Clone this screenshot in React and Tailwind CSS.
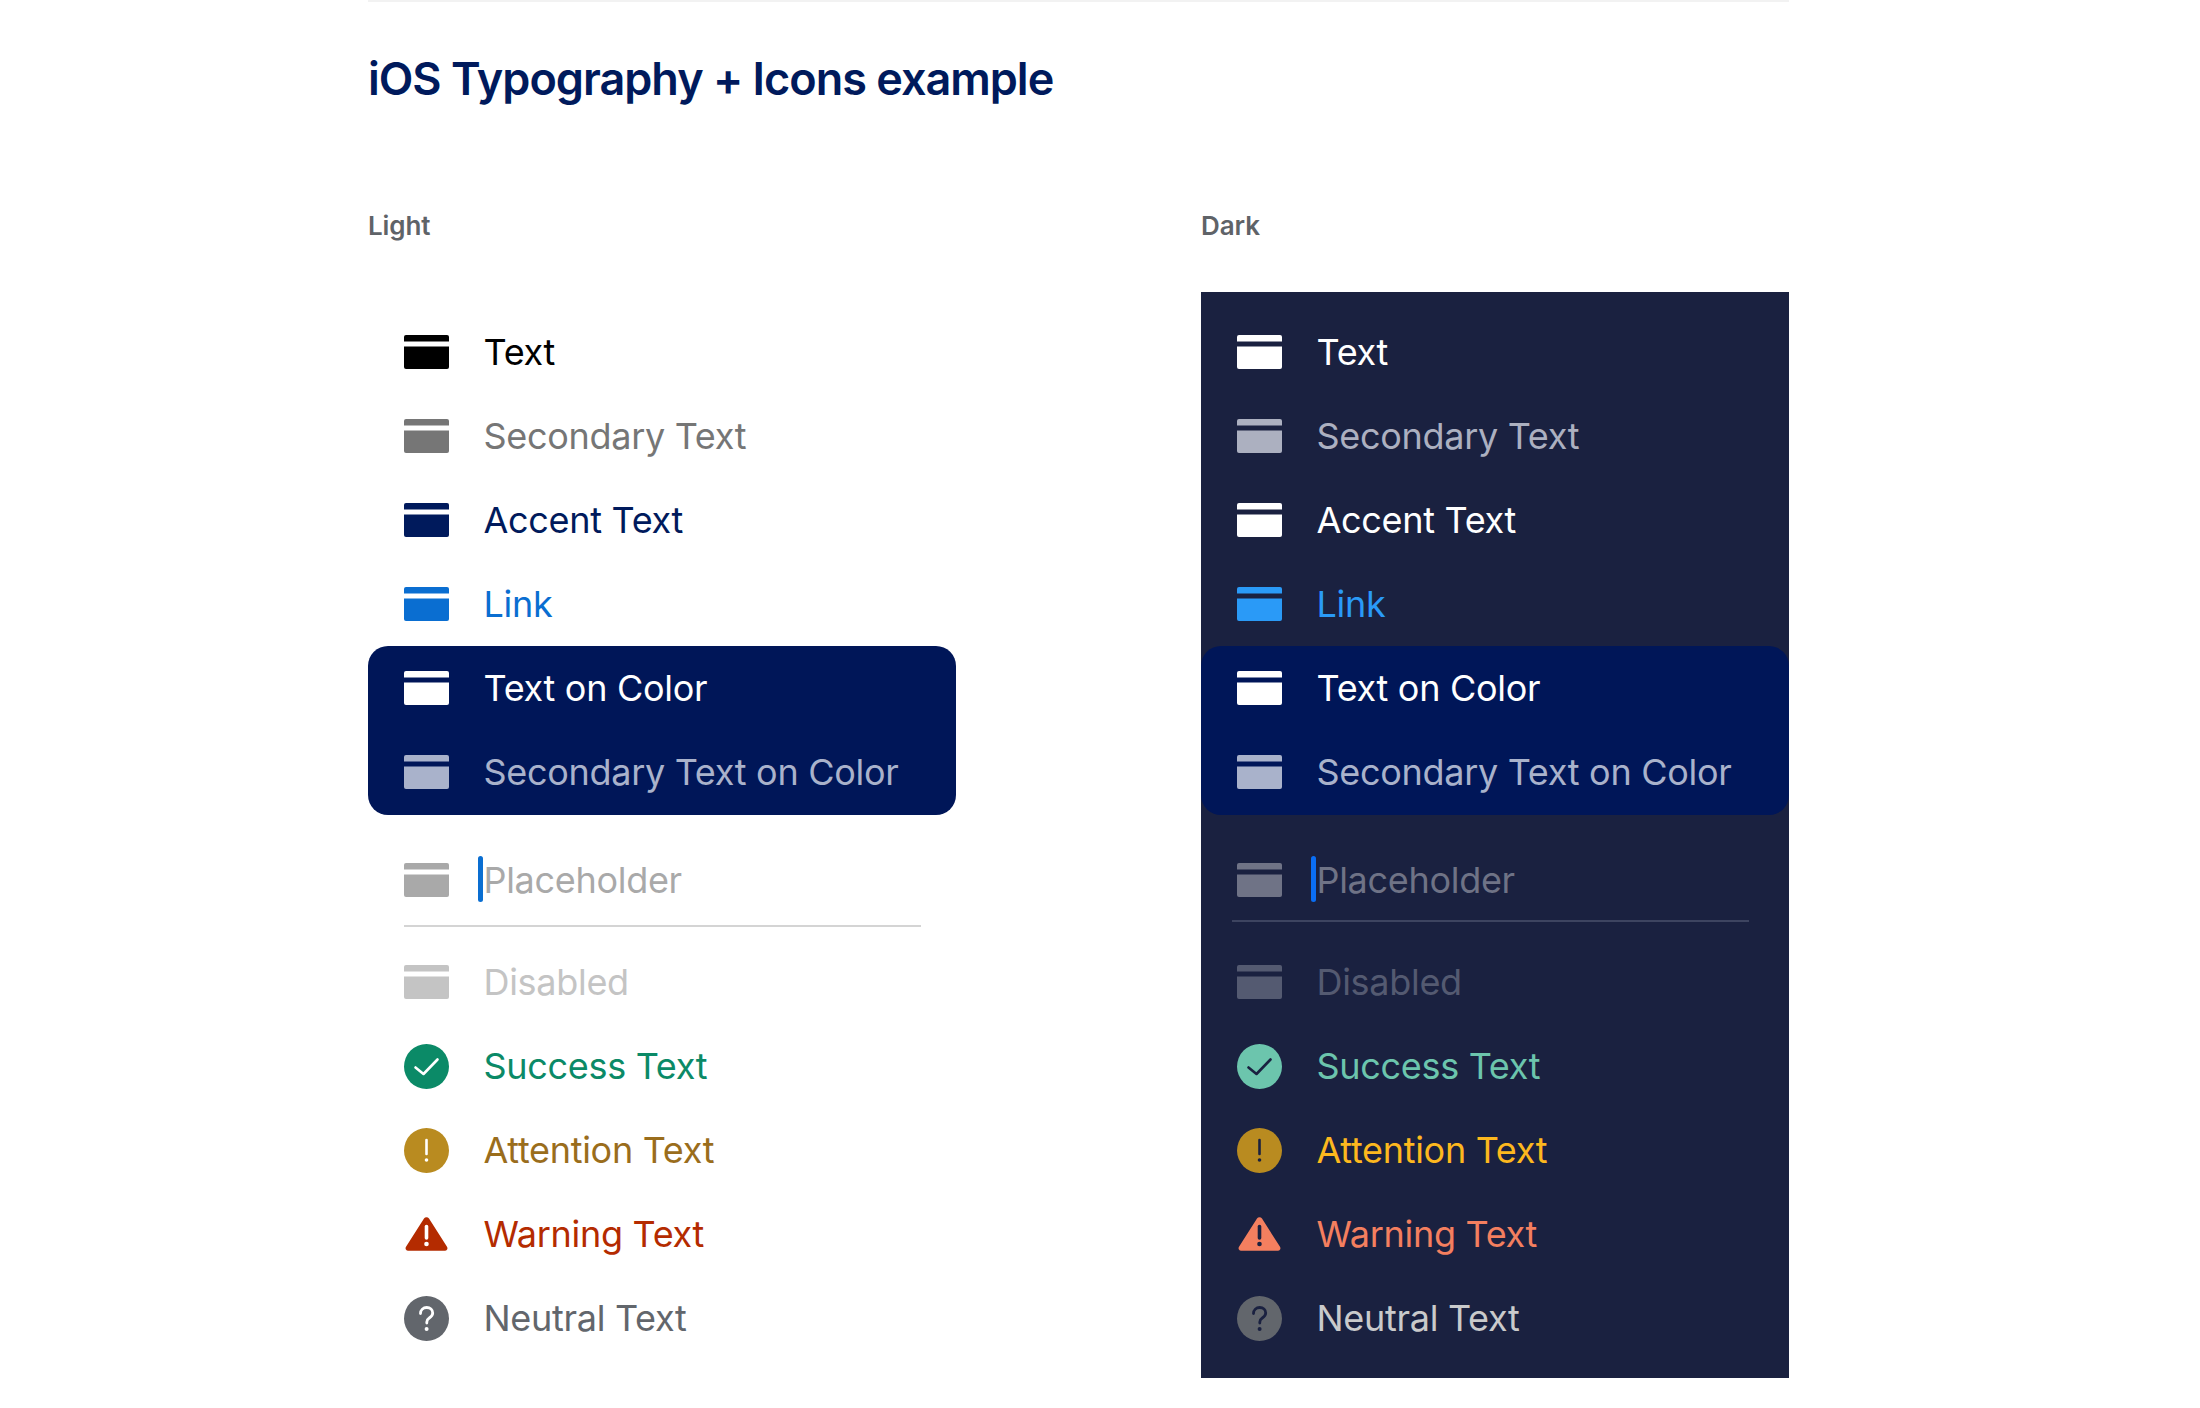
import React from 'react';

const sans = "font-['Inter','Noto_Sans',sans-serif]";

const CardIcon = ({ className }) => (
  <svg viewBox="0 0 45 34" className={`w-[45px] h-[34px] shrink-0 ${className}`} fill="currentColor">
    <path d="M2 0h41a2 2 0 0 1 2 2v4.500H0V2a2 2 0 0 1 2-2z" />
    <path d="M0 11.500h45V32a2 2 0 0 1-2 2H2a2 2 0 0 1-2-2z" />
  </svg>
);

const SuccessIcon = ({ bg, fg }) => (
  <svg viewBox="0 0 45 45" className={`w-[45px] h-[45px] shrink-0 ${bg}`}>
    <circle cx="22.5" cy="22.5" r="22.5" fill="currentColor" />
    <path d="M11.5 23.5l8 6.500 14-14.500" fill="none" stroke={fg} strokeWidth="2.6" strokeLinecap="round" strokeLinejoin="round" />
  </svg>
);

const AttentionIcon = ({ bg, fg }) => (
  <svg viewBox="0 0 45 45" className={`w-[45px] h-[45px] shrink-0 ${bg}`}>
    <circle cx="22.5" cy="22.5" r="22.5" fill="currentColor" />
    <path d="M22.5 12v14" fill="none" stroke={fg} strokeWidth="2.6" strokeLinecap="round" />
    <circle cx="22.5" cy="32" r="1.8" fill={fg} />
  </svg>
);

const WarningIcon = ({ bg, fg }) => (
  <svg viewBox="0 0 45 34" className={`w-[45px] h-[34px] shrink-0 ${bg}`}>
    <path d="M20 1.600a3 3 0 0 1 5 0L43 29.800a2.600 2.600 0 0 1-2.200 4H4.200a2.600 2.600 0 0 1-2.200-4z" fill="currentColor" />
    <path d="M22.5 9.500v11.500" fill="none" stroke={fg} strokeWidth="3.6" strokeLinecap="round" />
    <circle cx="22.5" cy="27" r="2.300" fill={fg} />
  </svg>
);

const NeutralIcon = ({ bg, fg }) => (
  <svg viewBox="0 0 45 45" className={`w-[45px] h-[45px] shrink-0 ${bg}`}>
    <circle cx="22.5" cy="22.5" r="22.5" fill="currentColor" />
    <path d="M16.5 17.500c0-3.600 2.700-6 6.200-6s6 2.300 6 5.500c0 2.600-1.700 3.900-3.400 5-1.500 1-2.500 1.900-2.500 4v1" fill="none" stroke={fg} strokeWidth="2.8" strokeLinecap="round" />
    <circle cx="22.6" cy="33" r="2" fill={fg} />
  </svg>
);

const Row = ({ icon, text, color, caret }) => (
  <div className="flex items-center h-[84px] gap-[35px]">
    {icon}
    <span className={`relative text-[36px] leading-[44px] tracking-[-0.3px] whitespace-nowrap ${color}`}>
      {caret && <span className={`absolute left-[-6px] top-[-2px] w-[5px] h-[46px] rounded-full ${caret}`} />}
      {text}
    </span>
  </div>
);

const Card = ({ text, color, icon, caret }) => (
  <Row icon={<CardIcon className={icon} />} text={text} color={color} caret={caret} />
);

const App = () => (
  <div className={`w-[2200px] h-[1408px] bg-white pl-[368px] overflow-hidden ${sans}`}>
    <div className="w-[1421px] h-[2px] bg-[#f2f2f2]" />
    <h1 className="mt-[49px] text-[45px] leading-[56px] font-semibold tracking-[-1px] text-[#001a5c]">
      iOS Typography + Icons example
    </h1>
    <div className="mt-[103px] flex gap-[245px] items-start">
      {/* light */}
      <div className="w-[588px]">
        <div className="text-[26px] leading-[32px] font-semibold tracking-[-0.1px] text-[#5f6368]">Light</div>
        <div className="mt-[68px]">
          <div className="pl-[35.5px]">
            <Card text="Text" color="text-black" icon="text-black" />
            <Card text="Secondary Text" color="text-[#767676]" icon="text-[#767676]" />
            <Card text="Accent Text" color="text-[#001a5c]" icon="text-[#001a5c]" />
            <Card text="Link" color="text-[#0a6ed1]" icon="text-[#0a6ed1]" />
          </div>
          <div className="h-[169px] pl-[35.5px] rounded-[20px] bg-[#001658]">
            <Card text="Text on Color" color="text-white" icon="text-white" />
            <Card text="Secondary Text on Color" color="text-[#a9b2cb]" icon="text-[#a9b2cb]" />
          </div>
          <div className="pl-[35.5px] mt-[23px]">
            <Card text="Placeholder" color="text-[#a9a9a9]" icon="text-[#a9a9a9]" caret="bg-[#0a6ed1]" />
            <div className="mt-[3px] w-[517px] h-[2px] bg-[#d4d4d4]" />
            <div className="mt-[13px]">
              <Card text="Disabled" color="text-[#c4c4c4]" icon="text-[#c4c4c4]" />
              <Row icon={<SuccessIcon bg="text-[#0b8a67]" fg="#ffffff" />} text="Success Text" color="text-[#0b8a67]" />
              <Row icon={<AttentionIcon bg="text-[#b98b20]" fg="#ffffff" />} text="Attention Text" color="text-[#9a6d1c]" />
              <Row icon={<WarningIcon bg="text-[#b42b00]" fg="#ffffff" />} text="Warning Text" color="text-[#b42b00]" />
              <Row icon={<NeutralIcon bg="text-[#62666c]" fg="#ffffff" />} text="Neutral Text" color="text-[#62666c]" />
            </div>
          </div>
        </div>
      </div>
      {/* dark */}
      <div className="w-[588px]">
        <div className="text-[26px] leading-[32px] font-semibold tracking-[-0.1px] text-[#5f6368]">Dark</div>
        <div className="mt-[50px] pt-[18px] pb-[18px] bg-[#1a2140]">
          <div className="pl-[35.5px]">
            <Card text="Text" color="text-white" icon="text-white" />
            <Card text="Secondary Text" color="text-[#acb0c0]" icon="text-[#acb0c0]" />
            <Card text="Accent Text" color="text-white" icon="text-white" />
            <Card text="Link" color="text-[#2a9af7]" icon="text-[#2a9af7]" />
          </div>
          <div className="h-[169px] pl-[35.5px] rounded-[20px] bg-[#001658]">
            <Card text="Text on Color" color="text-white" icon="text-white" />
            <Card text="Secondary Text on Color" color="text-[#a9b2cb]" icon="text-[#a9b2cb]" />
          </div>
          <div className="pl-[35.5px] mt-[23px]">
            <Card text="Placeholder" color="text-[#6f7386]" icon="text-[#6f7386]" caret="bg-[#0a6ef5]" />
            <div className="mt-[-2px] ml-[-5px] w-[517px] h-[2px] bg-[#3d4460]" />
            <div className="mt-[18px]">
              <Card text="Disabled" color="text-[#545a71]" icon="text-[#545a71]" />
              <Row icon={<SuccessIcon bg="text-[#6cc5ad]" fg="#1a2140" />} text="Success Text" color="text-[#6cc5ad]" />
              <Row icon={<AttentionIcon bg="text-[#b98b20]" fg="#1a2140" />} text="Attention Text" color="text-[#fdb81e]" />
              <Row icon={<WarningIcon bg="text-[#f47f5f]" fg="#1a2140" />} text="Warning Text" color="text-[#f47f5f]" />
              <Row icon={<NeutralIcon bg="text-[#62666c]" fg="#1a2140" />} text="Neutral Text" color="text-[#c9cacb]" />
            </div>
          </div>
        </div>
      </div>
    </div>
  </div>
);

export default App;
